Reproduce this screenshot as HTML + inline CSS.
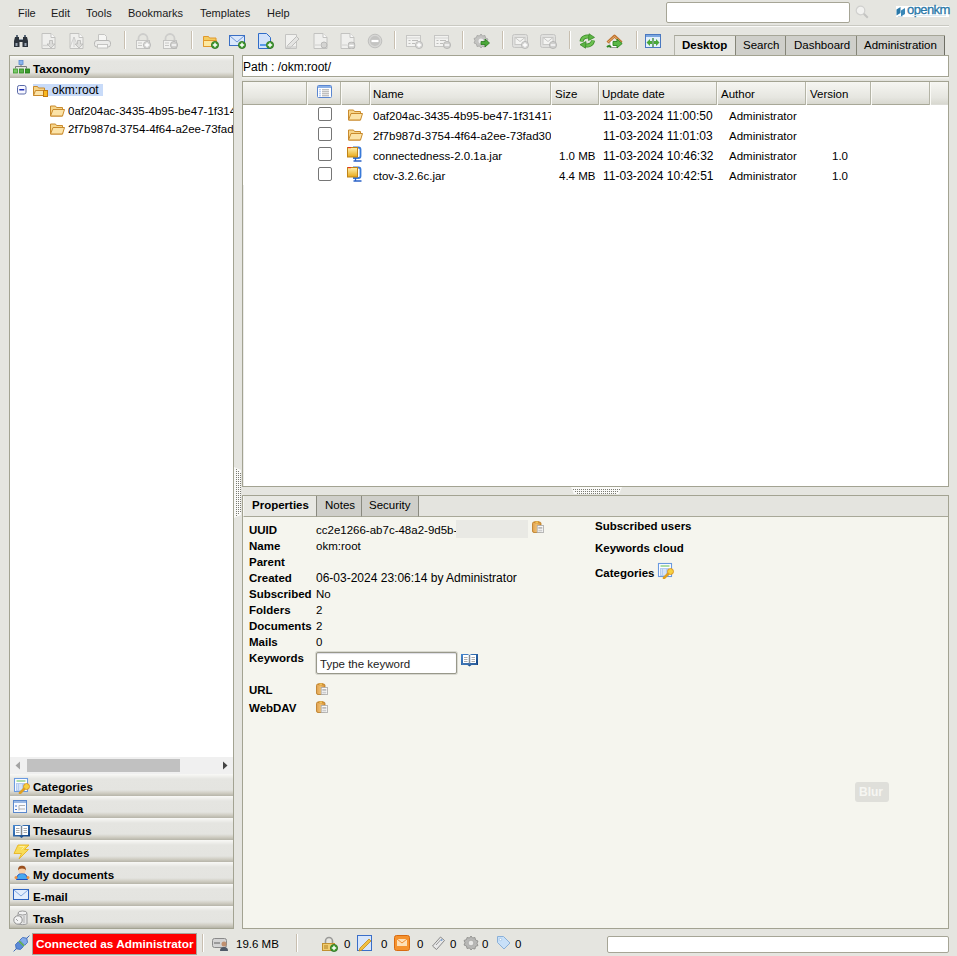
<!DOCTYPE html>
<html><head><meta charset="utf-8">
<style>
*{box-sizing:border-box;margin:0;padding:0}
html,body{width:957px;height:956px;overflow:hidden;background:#e5e5e0;font-family:"Liberation Sans",sans-serif;font-size:12px;color:#000;position:relative}
.a{position:absolute}
.t{position:absolute;line-height:14px;white-space:nowrap;font-size:11.5px}
.d{font-size:12px}
.b{font-weight:bold}
.menu .t{top:6px;color:#1a1a1a;font-size:11px}
.sep{position:absolute;top:31px;width:2px;height:18px;background:#c8bfb0;border-right:1px solid #fff}
.panel{position:absolute;border:1px solid #a3a392}
.hdr{position:absolute;left:0;right:0;height:22px;background:linear-gradient(#f8f8f6 0,#f1f1ee 2px,#e5e5e1 5px,#e4e4e0 16px,#d0cec4 19px,#b6b4a8 22px)}
.hdr .t{left:23px;top:6px;font-weight:bold;font-size:11.6px}
.tab{position:absolute;border:1px solid #a3a392;border-bottom:none}
.lh{background:linear-gradient(#f6f6f2,#e6e6e0 70%,#d8d8d0);border-bottom:1px solid #a8a898}
.cd{position:absolute;top:0;width:2px;height:23px;border-left:1px solid #b4b4a6;border-right:1px solid #fafaf6}
.row{position:absolute;left:0;width:705px;height:20px}
.cb{position:absolute;left:75px;top:2px;width:14px;height:14px;border:1px solid #767676;border-radius:2px;background:#fff}
.nm{left:130px;width:178px;overflow:hidden}
.ptab{position:absolute;top:0;height:21px;border-right:1px solid #8a8a80;border-bottom:1px solid #a8a898}
</style></head><body>
<svg width="0" height="0" style="position:absolute">
<defs>
<symbol id="dpage" viewBox="0 0 16 16"><path d="M1.5 0.5h9l4 4v11h-13z" fill="#efefed" stroke="#c2c2c0"/><path d="M10.5 0.5v4h4" fill="#fafafa" stroke="#c2c2c0"/></symbol>
<symbol id="gplus" viewBox="0 0 8 8"><circle cx="4" cy="4" r="3.6" fill="#3f9a2e" stroke="#2b7020" stroke-width=".8"/><path d="M4 1.8v4.4M1.8 4h4.4" stroke="#fff" stroke-width="1.4"/></symbol>
<symbol id="dplus" viewBox="0 0 8 8"><circle cx="4" cy="4" r="3.6" fill="#d8d8d6" stroke="#b4b4b2" stroke-width=".8"/><path d="M4 1.8v4.4M1.8 4h4.4" stroke="#fff" stroke-width="1.3"/></symbol>
<symbol id="dminus" viewBox="0 0 8 8"><circle cx="4" cy="4" r="3.6" fill="#d0d0ce" stroke="#b0b0ae" stroke-width=".8"/><path d="M1.8 4h4.4" stroke="#fff" stroke-width="1.3"/></symbol>
<symbol id="copy" viewBox="0 0 13 13"><linearGradient id="cg" x1="0" y1="0" x2="1" y2="0"><stop offset="0" stop-color="#e0a050"/><stop offset=".5" stop-color="#f0c070"/><stop offset="1" stop-color="#d08a30"/></linearGradient><rect x="0.5" y="1" width="8.5" height="10.5" rx="1.5" fill="url(#cg)" stroke="#b87820" stroke-width=".8"/><rect x="2.3" y="0.2" width="5" height="2" rx=".8" fill="#c88020"/><rect x="3.3" y="0.7" width="3" height="1" fill="#ffe070"/><rect x="5.2" y="4.4" width="6.3" height="7.2" fill="#f8f8f8" stroke="#a8a8a8" stroke-width=".8"/><path d="M6.3 6.5h4M6.3 7.7h4M6.3 9.8h4" stroke="#a0a0a0" stroke-width=".7"/></symbol>
<symbol id="folder" viewBox="0 0 16 16"><path d="M1.5 3.5h5l1 1.5h6v8.5h-12z" fill="#f6d58a" stroke="#c98a2c"/><path d="M1.5 13.5l2.5-6.5h11.5l-2 6.5z" fill="#fbe3a8" stroke="#c98a2c"/></symbol>
<symbol id="jar" viewBox="0 0 16 16"><linearGradient id="jg" x1="0" y1="0" x2="0" y2="1"><stop offset="0" stop-color="#fff2b0"/><stop offset="1" stop-color="#e8a818"/></linearGradient><path d="M6 1.5h5.5q2 0 2 2v6.5q0 2-2 2H6" fill="#fff" stroke="#3a7ad8" stroke-width="1.8"/><path d="M8.5 12v3M6.5 15h8" stroke="#2a62c8" stroke-width="1.3"/><rect x="0.5" y="1.5" width="10" height="9.5" fill="url(#jg)" stroke="#c08418"/><rect x="1" y="1" width="3" height="1.2" fill="#f03020"/></symbol>
</defs></svg>
<!-- menu -->
<div class="menu">
<div class="t" style="left:18px">File</div>
<div class="t" style="left:51px">Edit</div>
<div class="t" style="left:86px">Tools</div>
<div class="t" style="left:128px">Bookmarks</div>
<div class="t" style="left:200px">Templates</div>
<div class="t" style="left:267px">Help</div>
</div>
<div class="a" style="left:9px;top:25px;width:940px;height:1px;background:#c9c9c2"></div>
<div class="a" style="left:9px;top:26px;width:940px;height:1px;background:#fafaf8"></div>

<!-- toolbar -->
<svg class="a" style="left:13px;top:33px" width="16" height="16" viewBox="0 0 16 16"><path d="M2 4h4v2h4V4h4l1 4v6h-5.5V9h-3v5H1V8z" fill="#2c333b"/><path d="M3 2h2v2H3zM11 2h2v2h-2z" fill="#5a6878"/><path d="M2.5 10h2v3h-2zM11.5 10h2v3h-2z" fill="#9aa6b4"/><path d="M6 6.5h4" stroke="#8a98a8"/></svg>
<svg class="a" style="left:40px;top:33px" width="17" height="16"><use href="#dpage"/><path d="M3 12.5h5" stroke="#d4d4d2" stroke-width="1.5"/><path d="M9.5 7.5h3v3.5h2.5l-4 4-4-4h2.5z" fill="#dcdcda" stroke="#b8b8b6" stroke-width=".8"/></svg>
<svg class="a" style="left:68px;top:33px" width="17" height="16"><use href="#dpage"/><path d="M2 14l4-10 4 10M6 4v10" stroke="#c8c8c6" fill="none" stroke-width=".8"/><path d="M9.5 7.5h3v3.5h2.5l-4 4-4-4h2.5z" fill="#dcdcda" stroke="#b8b8b6" stroke-width=".8"/></svg>
<svg class="a" style="left:94px;top:33px" width="17" height="16"><path d="M4.5 1.5h6l2 2v5h-8z" fill="#f6f6f4" stroke="#c4c4c2"/><rect x="0.5" y="7.5" width="16" height="6.5" rx="2.5" fill="#ececea" stroke="#b8b8b6"/><rect x="3.5" y="11.5" width="10" height="3.5" fill="#f8f8f6" stroke="#c4c4c2"/></svg>
<div class="sep" style="left:124px"></div>
<svg class="a" style="left:135px;top:33px" width="16" height="16"><path d="M3.5 8V5.5a4.5 4.5 0 0 1 9 0V8" fill="none" stroke="#cdcdcb" stroke-width="1.8"/><rect x="1.5" y="7.5" width="13" height="8" fill="#f2f2f0" stroke="#c4c4c2"/><path d="M3 10h4M3 12.5h4" stroke="#c8c8c6"/><use href="#dplus" x="8" y="8" width="8" height="8"/></svg>
<svg class="a" style="left:162px;top:33px" width="16" height="16"><path d="M3.5 8V5.5a4.5 4.5 0 0 1 9 0V8" fill="none" stroke="#cdcdcb" stroke-width="1.8"/><rect x="1.5" y="7.5" width="13" height="8" fill="#f2f2f0" stroke="#c4c4c2"/><path d="M3 10h4M3 12.5h4" stroke="#c8c8c6"/><use href="#dminus" x="8" y="8" width="8" height="8"/></svg>
<div class="sep" style="left:191px"></div>
<svg class="a" style="left:202px;top:33px" width="17" height="16"><path d="M1.5 3.5h5l1 1.5h6.5v8.5h-12.5z" fill="#f4cc60" stroke="#e0982c"/><path d="M1.5 13.5v-6h13v6z" fill="#fde8a0" stroke="#e0982c"/><use href="#gplus" x="9" y="8" width="8" height="8"/></svg>
<svg class="a" style="left:229px;top:33px" width="17" height="16"><rect x="0.5" y="2.5" width="15" height="10" fill="#dbe8fb" stroke="#3a6fc4"/><path d="M1 3l7 6 7-6" fill="none" stroke="#6e96d8"/><use href="#gplus" x="9" y="8" width="8" height="8"/></svg>
<svg class="a" style="left:257px;top:33px" width="17" height="16"><path d="M1.5 0.5h8l4 4v11h-12z" fill="#d2e2fa" stroke="#2f6cc8"/><path d="M3 12h6" stroke="#5a9ae8" stroke-width="2"/><use href="#gplus" x="9" y="8" width="8" height="8"/></svg>
<svg class="a" style="left:284px;top:33px" width="17" height="16"><path d="M1.5 1.5h11v14h-11z" fill="#f1f1ef" stroke="#c4c4c2"/><path d="M3.5 12.5l9-9 2.5 2.5-9 9-3.5 1z" fill="#e4e4e2" stroke="#b8b8b6" stroke-width=".9"/><path d="M3 14h9" stroke="#d0d0ce" stroke-width="1.4"/></svg>
<svg class="a" style="left:312px;top:33px" width="17" height="16"><use href="#dpage"/><path d="M3 12h5" stroke="#d0d0ce"/><circle cx="12" cy="12" r="3" fill="#d4d4d2" stroke="#b8b8b6"/></svg>
<svg class="a" style="left:339px;top:33px" width="17" height="16"><use href="#dpage"/><path d="M3 12h5" stroke="#d0d0ce"/><use href="#dminus" x="8.5" y="8.5" width="8" height="8"/></svg>
<svg class="a" style="left:367px;top:33px" width="16" height="16"><circle cx="8" cy="8" r="6.8" fill="#d6d6d4" stroke="#c0c0be"/><circle cx="8" cy="8" r="5" fill="#c4c4c2"/><path d="M4.5 8h7" stroke="#fff" stroke-width="2.2"/></svg>
<div class="sep" style="left:394px"></div>
<svg class="a" style="left:406px;top:33px" width="17" height="16"><rect x="0.5" y="2.5" width="14" height="11" fill="#f2f2f0" stroke="#c6c6c4"/><path d="M1 5h13" stroke="#d4d4d2"/><path d="M2.5 7.5h2M2.5 10.5h2M6 7.5h6M6 10.5h3" stroke="#bdbdbb"/><use href="#dplus" x="9" y="8" width="8" height="8"/></svg>
<svg class="a" style="left:434px;top:33px" width="17" height="16"><rect x="0.5" y="2.5" width="14" height="11" fill="#f2f2f0" stroke="#c6c6c4"/><path d="M1 5h13" stroke="#d4d4d2"/><path d="M2.5 7.5h2M2.5 10.5h2M6 7.5h6M6 10.5h3" stroke="#bdbdbb"/><use href="#dminus" x="9" y="8" width="8" height="8"/></svg>
<div class="sep" style="left:462px"></div>
<svg class="a" style="left:473px;top:33px" width="17" height="16"><path d="M8 1l1.5 2 2.5-.5.5 2.5 2.5 1-1 2.3 1 2.2-2.5 1-.5 2.5-2.5-.5L8 15l-1.5-2-2.5.5-.5-2.5-2.5-1 1-2.2-1-2.3 2.5-1L4 2.5l2.5.5z" fill="#c4c4c2" stroke="#a4a4a2" stroke-width=".8"/><circle cx="8" cy="8" r="2.5" fill="#eee"/><path d="M8 8.5h4V6l4.5 4-4.5 4v-2.5H8z" fill="#4aa838" stroke="#2a7a20" stroke-width=".8"/></svg>
<div class="sep" style="left:502px"></div>
<svg class="a" style="left:512px;top:33px" width="17" height="16"><rect x="0.5" y="1.5" width="15" height="13" rx="2" fill="#e0e0de" stroke="#c4c4c2"/><rect x="3" y="4.5" width="10" height="7" fill="#f4f4f2" stroke="#c8c8c6"/><path d="M3 4.5l5 4 5-4" fill="none" stroke="#c8c8c6"/><use href="#dplus" x="9" y="8" width="8" height="8"/></svg>
<svg class="a" style="left:540px;top:33px" width="17" height="16"><rect x="0.5" y="1.5" width="15" height="13" rx="2" fill="#e0e0de" stroke="#c4c4c2"/><rect x="3" y="4.5" width="10" height="7" fill="#f4f4f2" stroke="#c8c8c6"/><path d="M3 4.5l5 4 5-4" fill="none" stroke="#c8c8c6"/><use href="#dminus" x="9" y="8" width="8" height="8"/></svg>
<div class="sep" style="left:569px"></div>
<svg class="a" style="left:579px;top:33px" width="17" height="16"><path d="M2.5 8.5C3 4.5 7 2.5 11 4" stroke="#3a8a28" stroke-width="4" fill="none"/><path d="M2.5 8.5C3 4.5 7 2.5 11 4" stroke="#6cc050" stroke-width="2.4" fill="none"/><path d="M10 0.8l5.5 3.6-6 3z" fill="#5cb444" stroke="#3a8a28" stroke-width=".8"/><path d="M14 7.5C13.5 11.5 9.5 13.5 5.5 12" stroke="#3a8a28" stroke-width="4" fill="none"/><path d="M14 7.5C13.5 11.5 9.5 13.5 5.5 12" stroke="#6cc050" stroke-width="2.4" fill="none"/><path d="M6.5 15.2L1 11.6l6-3z" fill="#5cb444" stroke="#3a8a28" stroke-width=".8"/></svg>
<svg class="a" style="left:606px;top:33px" width="18" height="16"><path d="M4 9v5.5h8" fill="#fff" stroke="#909090" stroke-width=".9"/><rect x="4.5" y="8" width="6" height="6" fill="#fff"/><path d="M1.5 9.5L8.5 3l7 6.5" fill="none" stroke="#c07430" stroke-width="3" stroke-linejoin="round"/><path d="M2 9L8.5 3.5 15 9" fill="none" stroke="#e8b070" stroke-width="1"/><path d="M7 8.5h4V6l5.2 4.5-5.2 4.5v-2.5H7z" fill="#5ab848" stroke="#2a8420" stroke-width=".9"/><path d="M1 14.2c1-1.8 3-1.8 4 0" fill="#40a030" stroke="#2a8420" stroke-width="1.6"/></svg>
<div class="sep" style="left:636px"></div>
<svg class="a" style="left:645px;top:33px" width="17" height="16"><rect x="0.5" y="1.5" width="15" height="13" fill="#e4f0fc" stroke="#4a78c0"/><rect x="1" y="2" width="14" height="2" fill="#7aa6e0"/><path d="M8 5v9" stroke="#2a7a20" stroke-width="1.2"/><path d="M1.5 9.5l3.5-3.5v2h2v3h-2v2zM14.5 9.5L11 6v2H9v3h2v2z" fill="#4aa838"/></svg>
<!-- search box top right -->
<div class="a" style="left:666px;top:2px;width:184px;height:21px;background:#fff;border:1px solid #a6a596;border-radius:2px"></div>

<!-- left panel -->
<div class="panel" style="left:9px;top:55px;width:225px;height:874px;background:#fff;overflow:hidden">
  <div class="hdr" style="top:0"><div class="t">Taxonomy</div></div>
  <svg class="a" style="left:3px;top:4px" width="17" height="14"><rect x="6" y="0.5" width="4" height="4" fill="#8ab4ec" stroke="#5a8ad0" stroke-width=".8"/><path d="M8 4.5v2M2.5 8.5v-2h11v2" fill="none" stroke="#7a7a7a"/><rect x="0.5" y="9" width="4" height="4" fill="#7ac86a" stroke="#3a9a2a" stroke-width=".8"/><rect x="6.5" y="9" width="4" height="4" fill="#5ab04a" stroke="#2a8a1a" stroke-width=".8"/><rect x="12.5" y="9" width="4" height="4" fill="#3a9a2a" stroke="#1a7a10" stroke-width=".8"/></svg>
  <!-- tree -->
  <svg class="a" style="left:7px;top:29px" width="10" height="10"><rect x="0.5" y="0.5" width="8.5" height="8.5" rx="1.8" fill="#f8f8ff" stroke="#5a6aa8"/><path d="M2.3 4.75h5" stroke="#1020b0" stroke-width="1.4"/></svg>
  <div class="a" style="left:23px;top:28px;width:70px;height:12px;background:#c8dbf9"></div>
  <svg class="a" style="left:23px;top:28px" width="16" height="14"><path d="M0.5 2.5h4l1 1.5h6v7.5h-11z" fill="#f6d58a" stroke="#c98a2c"/><path d="M0.5 11.5l2-5h10.5l-2 5z" fill="#fbe3a8" stroke="#c98a2c"/><rect x="10.5" y="6.5" width="4" height="6" fill="#f8b820" stroke="#c07810"/></svg>
  <div class="t d" style="left:42px;top:27px">okm:root</div>
  <svg class="a" style="left:39px;top:49px" width="16" height="12"><use href="#folder" x="0" y="-2.5" width="16" height="16"/></svg>
  <div class="t" style="left:58px;top:48px">0af204ac-3435-4b95-be47-1f3141</div>
  <svg class="a" style="left:39px;top:67px" width="16" height="12"><use href="#folder" x="0" y="-2.5" width="16" height="16"/></svg>
  <div class="t" style="left:58px;top:66px">2f7b987d-3754-4f64-a2ee-73fad30</div>
  <!-- scrollbar -->
  <div class="a" style="left:0;top:701px;width:224px;height:17px;background:#f0f0f0"></div>
  <div class="a" style="left:17px;top:703px;width:153px;height:13px;background:#c1c1c1"></div>
  <svg class="a" style="left:4px;top:705px" width="8" height="9"><path d="M6 0.5v8l-4.5-4z" fill="#a3a3a3"/></svg>
  <svg class="a" style="left:212px;top:705px" width="8" height="9"><path d="M1 0.5v8l4.5-4z" fill="#444"/></svg>
  <!-- stack headers -->
  <div class="hdr" style="top:718px"><div class="t">Categories</div></div>
  <div class="hdr" style="top:740px"><div class="t">Metadata</div></div>
  <div class="hdr" style="top:762px"><div class="t">Thesaurus</div></div>
  <div class="hdr" style="top:784px"><div class="t">Templates</div></div>
  <div class="hdr" style="top:806px"><div class="t">My documents</div></div>
  <div class="hdr" style="top:828px"><div class="t">E-mail</div></div>
  <div class="hdr" style="top:850px"><div class="t">Trash</div></div>
  <svg class="a" style="left:3px;top:721px" width="17" height="17"><rect x="1.5" y="1.5" width="13" height="13" fill="#fff" stroke="#6a9ae0" stroke-width="1.1"/><path d="M3.5 4h9" stroke="#6ac060" stroke-width="1.1"/><rect x="3" y="6" width="9" height="8" fill="#b4ccf0"/><path d="M4 8h1M6 8h3M4 10h1M6 10h3M4 12h1M6 12h3" stroke="#fff" stroke-width=".9"/><path d="M7 16l5-5" stroke="#e0a020" stroke-width="2.6" stroke-linecap="round"/><circle cx="13.5" cy="9.5" r="3" fill="#f6d040" stroke="#d88a18" stroke-width=".8"/></svg>
  <svg class="a" style="left:3px;top:744px" width="16" height="15"><rect x="0.5" y="0.5" width="13" height="12" fill="#f8faff" stroke="#5a88cc"/><rect x="1" y="1" width="12" height="2" fill="#9ab8e4"/><path d="M2 6h2M2 9.5h2" stroke="#4a7ad0"/><path d="M6 5.5h6M6 5.5v5M6 9h6" stroke="#b0b0b0" fill="none"/></svg>
  <svg class="a" style="left:3px;top:767px" width="17" height="15"><path d="M0 2h6.5l2 1 2-1H17v11.5h-6.5l-2 1.5-2-1.5H0z" fill="url(#bk)"/><rect x="2" y="3" width="5.8" height="9" fill="#fff"/><rect x="9.2" y="3" width="5.8" height="9" fill="#fff"/><path d="M3 5.5h3.5M3 7.5h3.5M3 9.5h3.5M10.5 5.5h3.5M10.5 7.5h3.5M10.5 9.5h3.5" stroke="#a4a4a4" stroke-width=".9"/><path d="M8.5 3.5v8.5" stroke="#8a8a8a" stroke-width="1"/></svg>
  <svg class="a" style="left:3px;top:788px" width="17" height="16"><path d="M5 1H16L11.5 5.5H15.5L6 15L8.5 9.5H1z" fill="#f8dc58" stroke="#e8b420" stroke-width=".9" stroke-linejoin="round"/><path d="M6.5 2.5h5l-3 3" fill="none" stroke="#fff2b0" stroke-width=".8"/></svg>
  <svg class="a" style="left:4px;top:809px" width="16" height="16"><path d="M2.5 14.5c0-3.5 2-6 5.5-6s5.5 2.5 5.5 6z" fill="#48a8f0" stroke="#1a4cc0" stroke-width="1"/><circle cx="2" cy="12.5" r="1.5" fill="#f09040"/><circle cx="14" cy="12.5" r="1.5" fill="#f09040"/><rect x="4.5" y="1.5" width="7" height="7" rx="2" fill="#f8d0a8"/><path d="M4 5.5C4 2 5.5 0.8 8 0.8s4 1.2 4 4.7c-.5-1.2-2-2-4-2s-3.5.8-4 2z" fill="#9a5020"/></svg>
  <svg class="a" style="left:3px;top:833px" width="17" height="12"><rect x="0.5" y="0.5" width="15" height="10" fill="#e4eefc" stroke="#2e64c0"/><path d="M1 1l7 6 7-6" fill="none" stroke="#84a8e0"/></svg>
  <svg class="a" style="left:3px;top:854px" width="16" height="16"><path d="M5 3.5h9v10c0 1.5-9 1.5-9 0z" fill="#e4e4e4" stroke="#9a9a9a"/><ellipse cx="9.5" cy="3" rx="4.5" ry="2" fill="#f0f0f0" stroke="#9a9a9a"/><path d="M8 6v7M11 6v7" stroke="#b0b0b0"/><circle cx="5" cy="10" r="4.2" fill="#f4f4f4" stroke="#909090"/><path d="M3 9l2 2" stroke="#a0a0a0"/></svg>
</div>

<!-- path -->
<div class="panel" style="left:242px;top:55px;width:707px;height:22px;background:#fff">
  <div class="t d" style="left:0px;top:4px">Path : /okm:root/</div>
</div>

<div class="a" style="left:242px;top:77px;width:707px;height:4px;background:linear-gradient(#f4f4f0,#e0e0da)"></div>
<!-- file list -->
<div class="panel" style="left:242px;top:81px;width:707px;height:406px;background:#fff;overflow:hidden">
  <div class="a lh" style="left:0;top:0;width:705px;height:23px"></div><div class="a" style="left:688px;top:22px;width:17px;height:1px;background:#dcdcd6"></div>
  <div class="cd" style="left:63px"></div><div class="cd" style="left:97px"></div><div class="cd" style="left:126px"></div>
  <div class="cd" style="left:307px"></div><div class="cd" style="left:355px"></div><div class="cd" style="left:473px"></div>
  <div class="cd" style="left:562px"></div><div class="cd" style="left:627px"></div><div class="cd" style="left:686px"></div>
  <svg class="a" style="left:74px;top:3px" width="16" height="14"><rect x="0.5" y="0.5" width="14" height="12" rx="1" fill="#fff" stroke="#5a86d0"/><rect x="1" y="1" width="13" height="2" fill="#8ab0e8"/><path d="M5 4.8h7M5 6.8h7M5 8.8h7M5 10.8h7" stroke="#9a9a9a" stroke-width=".9"/><path d="M2.5 4.8h1M2.5 6.8h1M2.5 8.8h1M2.5 10.8h1" stroke="#3a78e0" stroke-width="1"/></svg>
  <div class="t" style="left:130px;top:5px">Name</div>
  <div class="t" style="left:312px;top:5px">Size</div>
  <div class="t" style="left:359px;top:5px">Update date</div>
  <div class="t" style="left:478px;top:5px">Author</div>
  <div class="t" style="left:567px;top:5px">Version</div>
  <div class="a" style="left:0;top:103px;width:1px;height:302px;background:#ececea"></div>
  <!-- rows -->
  <div class="row" style="top:23px">
    <div class="cb"></div>
    <svg class="a" style="left:104px;top:4px" width="16" height="12"><use href="#folder" x="0" y="-2.5" width="16" height="16"/></svg>
    <div class="t nm" style="top:4px">0af204ac-3435-4b95-be47-1f314171c2a5</div>
    <div class="t d" style="left:360px;top:4px">11-03-2024 11:00:50</div>
    <div class="t" style="left:486px;top:4px">Administrator</div>
  </div>
  <div class="row" style="top:43px">
    <div class="cb"></div>
    <svg class="a" style="left:104px;top:4px" width="16" height="12"><use href="#folder" x="0" y="-2.5" width="16" height="16"/></svg>
    <div class="t nm" style="top:4px">2f7b987d-3754-4f64-a2ee-73fad30</div>
    <div class="t d" style="left:360px;top:4px">11-03-2024 11:01:03</div>
    <div class="t" style="left:486px;top:4px">Administrator</div>
  </div>
  <div class="row" style="top:63px">
    <div class="cb"></div>
    <svg class="a" style="left:104px;top:1px" width="16" height="16"><use href="#jar"/></svg>
    <div class="t nm" style="top:4px">connectedness-2.0.1a.jar</div>
    <div class="t" style="left:316px;top:4px">1.0 MB</div>
    <div class="t d" style="left:360px;top:4px">11-03-2024 10:46:32</div>
    <div class="t" style="left:486px;top:4px">Administrator</div>
    <div class="t" style="left:589px;top:4px">1.0</div>
  </div>
  <div class="row" style="top:83px">
    <div class="cb"></div>
    <svg class="a" style="left:104px;top:1px" width="16" height="16"><use href="#jar"/></svg>
    <div class="t nm" style="top:4px">ctov-3.2.6c.jar</div>
    <div class="t" style="left:316px;top:4px">4.4 MB</div>
    <div class="t d" style="left:360px;top:4px">11-03-2024 10:42:51</div>
    <div class="t" style="left:486px;top:4px">Administrator</div>
    <div class="t" style="left:589px;top:4px">1.0</div>
  </div>
</div>

<!-- properties -->
<div class="panel" style="left:242px;top:495px;width:707px;height:434px;background:#f5f5ee;overflow:hidden">
  <div class="a" style="left:0;top:0;width:705px;height:21px;background:#e4e4df;border-bottom:1px solid #a8a898"></div>
  <div class="ptab" style="left:0;width:74px;background:#e8e8e3;height:21px;border-left:1px solid #f6f6f2"><div class="t b" style="left:8px;top:2px">Properties</div></div>
  <div class="ptab" style="left:74px;width:45px;background:#cfcfca"><div class="t" style="left:8px;top:2px">Notes</div></div>
  <div class="ptab" style="left:119px;width:57px;background:#cfcfca"><div class="t" style="left:7px;top:2px">Security</div></div>
  <!-- props -->
  <div class="t b" style="left:6px;top:27px">UUID</div>
  <div class="t b" style="left:6px;top:43px">Name</div>
  <div class="t b" style="left:6px;top:59px">Parent</div>
  <div class="t b" style="left:6px;top:75px">Created</div>
  <div class="t b" style="left:6px;top:91px">Subscribed</div>
  <div class="t b" style="left:6px;top:107px">Folders</div>
  <div class="t b" style="left:6px;top:123px">Documents</div>
  <div class="t b" style="left:6px;top:139px">Mails</div>
  <div class="t b" style="left:6px;top:155px">Keywords</div>
  <div class="t b" style="left:6px;top:187px">URL</div>
  <div class="t b" style="left:6px;top:205px">WebDAV</div>
  <div class="t" style="left:73px;top:27px">cc2e1266-ab7c-48a2-9d5b-</div>
  <div class="a" style="left:213px;top:24px;width:72px;height:18px;background:#e9e9e4"></div>
  <svg class="a" style="left:289px;top:25px" width="13" height="13"><use href="#copy"/></svg>
  <div class="t" style="left:73px;top:43px">okm:root</div>
  <div class="t d" style="left:73px;top:75px">06-03-2024 23:06:14 by Administrator</div>
  <div class="t" style="left:73px;top:91px">No</div>
  <div class="t" style="left:73px;top:107px">2</div>
  <div class="t" style="left:73px;top:123px">2</div>
  <div class="t" style="left:73px;top:139px">0</div>
  <div class="a" style="left:73px;top:156px;width:141px;height:22px;background:#fff;border:1px solid #98988a;border-radius:2px;box-shadow:inset 0 1px 1px #dcdce4,0 0 0 1px #d8d8d0"></div>
  <div class="t" style="left:77px;top:161px;color:#222">Type the keyword</div>
  <svg class="a" style="left:218px;top:157px" width="17" height="14"><defs><linearGradient id="bk" x1="0" y1="0" x2="1" y2="1"><stop offset="0" stop-color="#4a8ad0"/><stop offset="1" stop-color="#0a3a7a"/></linearGradient></defs><path d="M0 1h6.5l2 1 2-1H17v11h-6.5l-2 1.5-2-1.5H0z" fill="url(#bk)"/><rect x="2" y="2" width="5.8" height="8" fill="#fff"/><rect x="9.2" y="2" width="5.8" height="8" fill="#fff"/><path d="M3 4.5h3.5M3 6.5h3.5M3 8.5h3.5M10.5 4.5h3.5M10.5 6.5h3.5M10.5 8.5h3.5" stroke="#a4a4a4" stroke-width=".9"/><path d="M8.5 2.5v8" stroke="#8a8a8a" stroke-width="1"/><path d="M1 11h15" stroke="#6a9ad0" stroke-width=".6"/></svg>
  <svg class="a" style="left:73px;top:187px" width="13" height="13"><use href="#copy"/></svg>
  <svg class="a" style="left:73px;top:205px" width="13" height="13"><use href="#copy"/></svg>
  <div class="t b" style="left:352px;top:23px">Subscribed users</div>
  <div class="t b" style="left:352px;top:45px">Keywords cloud</div>
  <div class="t b" style="left:352px;top:70px">Categories</div>
  <svg class="a" style="left:414px;top:66px" width="17" height="17"><rect x="1.5" y="1.5" width="13" height="13" fill="#fff" stroke="#6a9ae0" stroke-width="1.1"/><path d="M3.5 4h9" stroke="#6ac060" stroke-width="1.1"/><rect x="3" y="6" width="9" height="8" fill="#b4ccf0"/><path d="M4 8h1M6 8h3M4 10h1M6 10h3M4 12h1M6 12h3" stroke="#fff" stroke-width=".9"/><path d="M7 16l5-5" stroke="#e0a020" stroke-width="2.6" stroke-linecap="round"/><circle cx="13.5" cy="9.5" r="3" fill="#f6d040" stroke="#d88a18" stroke-width=".8"/></svg>
  <div class="a" style="left:612px;top:286px;width:34px;height:20px;background:#dfdfda;border-radius:3px"></div>
  <div class="t b" style="left:616px;top:289px;color:#f6f6f2;font-size:12px">Blur</div>
</div>

<!-- magnifier + logo -->
<svg class="a" style="left:855px;top:5px" width="15" height="14"><circle cx="5.5" cy="5.5" r="4.3" fill="#f2f2f0" stroke="#d0d0ce" stroke-width="1.2"/><path d="M8.8 8.8l4 4" stroke="#c4c4c2" stroke-width="2"/></svg>
<div class="a" style="left:896px;top:6px;width:53px;height:11px;background:#fff"></div>
<svg class="a" style="left:896px;top:6px" width="11" height="11"><path d="M0.5 3.5l4-2.5v6l-4 2.5z" fill="#2a78a8"/><path d="M5 4.5l4-2.5v6l-4 2.5z" fill="#3a88b8"/><path d="M2 10.5l5 .3" stroke="#9ac0d8" stroke-width=".6"/></svg>
<div class="t" style="left:907px;top:3px;color:#2a78a8;font-size:13px;letter-spacing:-0.6px;-webkit-text-stroke:0.3px #2a78a8">openkm</div>
<div class="a" style="left:912px;top:15px;width:34px;height:1px;background:#dde9f0"></div>
<!-- tabs -->
<div class="a" style="left:674px;top:35px;width:271px;height:20px;background:#cfcfca;border-top:1px solid #a6a698"></div>
<div class="a" style="left:674px;top:35px;width:62px;height:20px;background:#e6e6e1;border-top:1px solid #a6a698;border-left:1px solid #b4b4aa"></div>
<div class="a" style="left:735px;top:36px;width:1px;height:19px;background:#858578"></div>
<div class="a" style="left:785px;top:36px;width:1px;height:19px;background:#858578"></div>
<div class="a" style="left:856px;top:36px;width:1px;height:19px;background:#858578"></div>
<div class="a" style="left:944px;top:36px;width:1px;height:19px;background:#6e6e64"></div>
<div class="t b" style="left:682px;top:38px">Desktop</div>
<div class="t" style="left:743px;top:38px">Search</div>
<div class="t" style="left:794px;top:38px">Dashboard</div>
<div class="t" style="left:864px;top:38px">Administration</div>
<!-- splitters -->
<svg class="a" style="left:234px;top:467px" width="8" height="52"><path d="M0 0v51l7-3V3z" fill="#fafaf8"/><rect x="2" y="2" width="1" height="1" fill="#7a7a72"/><rect x="2" y="4" width="1" height="1" fill="#7a7a72"/><rect x="2" y="6" width="1" height="1" fill="#7a7a72"/><rect x="2" y="8" width="1" height="1" fill="#7a7a72"/><rect x="2" y="10" width="1" height="1" fill="#7a7a72"/><rect x="2" y="12" width="1" height="1" fill="#7a7a72"/><rect x="2" y="14" width="1" height="1" fill="#7a7a72"/><rect x="2" y="16" width="1" height="1" fill="#7a7a72"/><rect x="2" y="18" width="1" height="1" fill="#7a7a72"/><rect x="2" y="20" width="1" height="1" fill="#7a7a72"/><rect x="2" y="22" width="1" height="1" fill="#7a7a72"/><rect x="2" y="24" width="1" height="1" fill="#7a7a72"/><rect x="2" y="26" width="1" height="1" fill="#7a7a72"/><rect x="2" y="28" width="1" height="1" fill="#7a7a72"/><rect x="2" y="30" width="1" height="1" fill="#7a7a72"/><rect x="2" y="32" width="1" height="1" fill="#7a7a72"/><rect x="2" y="34" width="1" height="1" fill="#7a7a72"/><rect x="2" y="36" width="1" height="1" fill="#7a7a72"/><rect x="2" y="38" width="1" height="1" fill="#7a7a72"/><rect x="2" y="40" width="1" height="1" fill="#7a7a72"/><rect x="2" y="42" width="1" height="1" fill="#7a7a72"/><rect x="2" y="44" width="1" height="1" fill="#7a7a72"/><rect x="2" y="46" width="1" height="1" fill="#7a7a72"/><rect x="2" y="48" width="1" height="1" fill="#7a7a72"/><rect x="4" y="4" width="1" height="1" fill="#7a7a72"/><rect x="4" y="6" width="1" height="1" fill="#7a7a72"/><rect x="4" y="8" width="1" height="1" fill="#7a7a72"/><rect x="4" y="10" width="1" height="1" fill="#7a7a72"/><rect x="4" y="12" width="1" height="1" fill="#7a7a72"/><rect x="4" y="14" width="1" height="1" fill="#7a7a72"/><rect x="4" y="16" width="1" height="1" fill="#7a7a72"/><rect x="4" y="18" width="1" height="1" fill="#7a7a72"/><rect x="4" y="20" width="1" height="1" fill="#7a7a72"/><rect x="4" y="22" width="1" height="1" fill="#7a7a72"/><rect x="4" y="24" width="1" height="1" fill="#7a7a72"/><rect x="4" y="26" width="1" height="1" fill="#7a7a72"/><rect x="4" y="28" width="1" height="1" fill="#7a7a72"/><rect x="4" y="30" width="1" height="1" fill="#7a7a72"/><rect x="4" y="32" width="1" height="1" fill="#7a7a72"/><rect x="4" y="34" width="1" height="1" fill="#7a7a72"/><rect x="4" y="36" width="1" height="1" fill="#7a7a72"/><rect x="4" y="38" width="1" height="1" fill="#7a7a72"/><rect x="4" y="40" width="1" height="1" fill="#7a7a72"/><rect x="4" y="42" width="1" height="1" fill="#7a7a72"/><rect x="4" y="44" width="1" height="1" fill="#7a7a72"/><rect x="4" y="46" width="1" height="1" fill="#7a7a72"/><rect x="6" y="6" width="1" height="1" fill="#7a7a72"/><rect x="6" y="8" width="1" height="1" fill="#7a7a72"/><rect x="6" y="10" width="1" height="1" fill="#7a7a72"/><rect x="6" y="12" width="1" height="1" fill="#7a7a72"/><rect x="6" y="14" width="1" height="1" fill="#7a7a72"/><rect x="6" y="16" width="1" height="1" fill="#7a7a72"/><rect x="6" y="18" width="1" height="1" fill="#7a7a72"/><rect x="6" y="20" width="1" height="1" fill="#7a7a72"/><rect x="6" y="22" width="1" height="1" fill="#7a7a72"/><rect x="6" y="24" width="1" height="1" fill="#7a7a72"/><rect x="6" y="26" width="1" height="1" fill="#7a7a72"/><rect x="6" y="28" width="1" height="1" fill="#7a7a72"/><rect x="6" y="30" width="1" height="1" fill="#7a7a72"/><rect x="6" y="32" width="1" height="1" fill="#7a7a72"/><rect x="6" y="34" width="1" height="1" fill="#7a7a72"/><rect x="6" y="36" width="1" height="1" fill="#7a7a72"/><rect x="6" y="38" width="1" height="1" fill="#7a7a72"/><rect x="6" y="40" width="1" height="1" fill="#7a7a72"/><rect x="6" y="42" width="1" height="1" fill="#7a7a72"/><rect x="6" y="44" width="1" height="1" fill="#7a7a72"/></svg>
<svg class="a" style="left:571px;top:487px" width="52" height="8"><path d="M0 0h51l-3 7H3z" fill="#fafaf8"/><rect x="2" y="2" width="1" height="1" fill="#7a7a72"/><rect x="4" y="2" width="1" height="1" fill="#7a7a72"/><rect x="6" y="2" width="1" height="1" fill="#7a7a72"/><rect x="8" y="2" width="1" height="1" fill="#7a7a72"/><rect x="10" y="2" width="1" height="1" fill="#7a7a72"/><rect x="12" y="2" width="1" height="1" fill="#7a7a72"/><rect x="14" y="2" width="1" height="1" fill="#7a7a72"/><rect x="16" y="2" width="1" height="1" fill="#7a7a72"/><rect x="18" y="2" width="1" height="1" fill="#7a7a72"/><rect x="20" y="2" width="1" height="1" fill="#7a7a72"/><rect x="22" y="2" width="1" height="1" fill="#7a7a72"/><rect x="24" y="2" width="1" height="1" fill="#7a7a72"/><rect x="26" y="2" width="1" height="1" fill="#7a7a72"/><rect x="28" y="2" width="1" height="1" fill="#7a7a72"/><rect x="30" y="2" width="1" height="1" fill="#7a7a72"/><rect x="32" y="2" width="1" height="1" fill="#7a7a72"/><rect x="34" y="2" width="1" height="1" fill="#7a7a72"/><rect x="36" y="2" width="1" height="1" fill="#7a7a72"/><rect x="38" y="2" width="1" height="1" fill="#7a7a72"/><rect x="40" y="2" width="1" height="1" fill="#7a7a72"/><rect x="42" y="2" width="1" height="1" fill="#7a7a72"/><rect x="44" y="2" width="1" height="1" fill="#7a7a72"/><rect x="46" y="2" width="1" height="1" fill="#7a7a72"/><rect x="48" y="2" width="1" height="1" fill="#7a7a72"/><rect x="4" y="4" width="1" height="1" fill="#7a7a72"/><rect x="6" y="4" width="1" height="1" fill="#7a7a72"/><rect x="8" y="4" width="1" height="1" fill="#7a7a72"/><rect x="10" y="4" width="1" height="1" fill="#7a7a72"/><rect x="12" y="4" width="1" height="1" fill="#7a7a72"/><rect x="14" y="4" width="1" height="1" fill="#7a7a72"/><rect x="16" y="4" width="1" height="1" fill="#7a7a72"/><rect x="18" y="4" width="1" height="1" fill="#7a7a72"/><rect x="20" y="4" width="1" height="1" fill="#7a7a72"/><rect x="22" y="4" width="1" height="1" fill="#7a7a72"/><rect x="24" y="4" width="1" height="1" fill="#7a7a72"/><rect x="26" y="4" width="1" height="1" fill="#7a7a72"/><rect x="28" y="4" width="1" height="1" fill="#7a7a72"/><rect x="30" y="4" width="1" height="1" fill="#7a7a72"/><rect x="32" y="4" width="1" height="1" fill="#7a7a72"/><rect x="34" y="4" width="1" height="1" fill="#7a7a72"/><rect x="36" y="4" width="1" height="1" fill="#7a7a72"/><rect x="38" y="4" width="1" height="1" fill="#7a7a72"/><rect x="40" y="4" width="1" height="1" fill="#7a7a72"/><rect x="42" y="4" width="1" height="1" fill="#7a7a72"/><rect x="44" y="4" width="1" height="1" fill="#7a7a72"/><rect x="46" y="4" width="1" height="1" fill="#7a7a72"/><rect x="6" y="6" width="1" height="1" fill="#7a7a72"/><rect x="8" y="6" width="1" height="1" fill="#7a7a72"/><rect x="10" y="6" width="1" height="1" fill="#7a7a72"/><rect x="12" y="6" width="1" height="1" fill="#7a7a72"/><rect x="14" y="6" width="1" height="1" fill="#7a7a72"/><rect x="16" y="6" width="1" height="1" fill="#7a7a72"/><rect x="18" y="6" width="1" height="1" fill="#7a7a72"/><rect x="20" y="6" width="1" height="1" fill="#7a7a72"/><rect x="22" y="6" width="1" height="1" fill="#7a7a72"/><rect x="24" y="6" width="1" height="1" fill="#7a7a72"/><rect x="26" y="6" width="1" height="1" fill="#7a7a72"/><rect x="28" y="6" width="1" height="1" fill="#7a7a72"/><rect x="30" y="6" width="1" height="1" fill="#7a7a72"/><rect x="32" y="6" width="1" height="1" fill="#7a7a72"/><rect x="34" y="6" width="1" height="1" fill="#7a7a72"/><rect x="36" y="6" width="1" height="1" fill="#7a7a72"/><rect x="38" y="6" width="1" height="1" fill="#7a7a72"/><rect x="40" y="6" width="1" height="1" fill="#7a7a72"/><rect x="42" y="6" width="1" height="1" fill="#7a7a72"/><rect x="44" y="6" width="1" height="1" fill="#7a7a72"/></svg>
<!-- status bar -->
<svg class="a" style="left:12px;top:934px" width="19" height="19"><g transform="rotate(-45 9.5 9.5)"><path d="M-1.5 9.5h3.5l2.5-3.5h4v7h-4l-2.5-3.5z" fill="#5a8ad8" stroke="#3a68b8" stroke-width=".8"/><path d="M20.5 9.5H17l-2.5-3.5h-4v7h4l2.5-3.5z" fill="#84acea" stroke="#3a68b8" stroke-width=".8"/><path d="M9.5 6v7" stroke="#5ab048" stroke-width="1.6"/></g></svg>
<div class="a" style="left:202px;top:934px;width:2px;height:18px;background:#c8bfb0;border-right:1px solid #fff"></div>
<svg class="a" style="left:212px;top:936px" width="18" height="15"><rect x="0.5" y="2.5" width="14" height="9" rx="2" fill="#d4d4d4" stroke="#8a8a8a"/><rect x="2" y="6" width="6" height="2" fill="#9a9a9a"/><circle cx="12" cy="8" r="2.5" fill="#c09070"/><path d="M8 15c0-3 1.5-4 4-4s4 1 4 4z" fill="#505a68"/></svg>
<div class="t" style="left:236px;top:937px">19.6 MB</div>
<div class="a" style="left:296px;top:934px;width:2px;height:18px;background:#c8bfb0;border-right:1px solid #fff"></div>
<svg class="a" style="left:321px;top:936px" width="17" height="16"><path d="M4.5 7V5a3.5 3.5 0 0 1 7 0v2" fill="none" stroke="#9a9a98" stroke-width="1.6"/><rect x="1.5" y="7.5" width="12" height="7" fill="#f0cc70" stroke="#c09030"/><path d="M3 10h4M3 12h4" stroke="#b08020"/><use href="#gplus" x="9" y="8" width="8" height="8"/></svg>
<div class="t" style="left:344px;top:937px">0</div>
<svg class="a" style="left:357px;top:935px" width="17" height="17"><rect x="0.5" y="0.5" width="14" height="15" fill="#d8e6fa" stroke="#3a6ec8"/><path d="M3 13l9-9 2 2-9 9-3 1z" fill="#f2c040" stroke="#c08a20" stroke-width=".8"/></svg>
<div class="t" style="left:381px;top:937px">0</div>
<svg class="a" style="left:394px;top:935px" width="16" height="16"><rect x="0.5" y="0.5" width="15" height="15" rx="2" fill="#f5922e" stroke="#d86a10"/><rect x="3" y="4" width="10" height="7" fill="#fde0b8"/><path d="M3 4l5 4 5-4" fill="none" stroke="#f08a30"/></svg>
<div class="t" style="left:417px;top:937px">0</div>
<svg class="a" style="left:431px;top:935px" width="15" height="16"><path d="M1.5 11l8-9 4 3.5-8 9z" fill="#e8e8e8" stroke="#8a8a8a"/><path d="M5 10l4.5-5" stroke="#9a9a9a"/><circle cx="10.5" cy="5" r="1" fill="#7aa0d0"/></svg>
<div class="t" style="left:450px;top:937px">0</div>
<svg class="a" style="left:463px;top:935px" width="16" height="16"><path d="M8 1l1.5 2 2.5-.5.5 2.5 2.5 1-1 2.3 1 2.2-2.5 1-.5 2.5-2.5-.5L8 15l-1.5-2-2.5.5-.5-2.5-2.5-1 1-2.2-1-2.3 2.5-1L4 2.5l2.5.5z" fill="#b8b8b6" stroke="#8a8a88" stroke-width=".8"/><circle cx="8" cy="8" r="2.8" fill="#e8e8e6" stroke="#9a9a98" stroke-width=".6"/></svg>
<div class="t" style="left:482px;top:937px">0</div>
<svg class="a" style="left:496px;top:935px" width="15" height="15"><path d="M1.5 1.5h6l6.5 6.5-6 6-6.5-6.5z" fill="#c8e0f8" stroke="#8ab0d8"/><circle cx="4.5" cy="4.5" r="1.2" fill="#fff" stroke="#8ab0d8" stroke-width=".6"/></svg>
<div class="t" style="left:515px;top:937px">0</div>
<!-- status -->
<div class="a" style="left:32px;top:933px;width:165px;height:22px;background:#f00;border:1px solid #a9a49c"></div>
<div class="t b" style="left:36px;top:937px;color:#fff;font-size:11.8px">Connected as Administrator</div>
<div class="a" style="left:607px;top:936px;width:342px;height:17px;background:#fff;border:1px solid #a6a596;border-radius:2px"></div>
</body></html>
